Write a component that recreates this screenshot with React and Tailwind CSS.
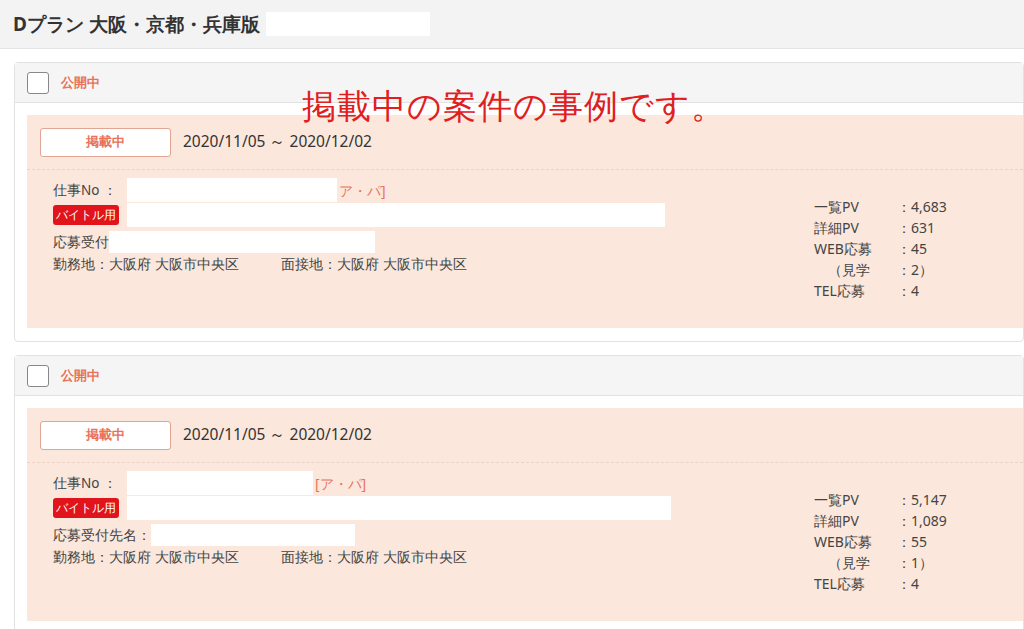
import React from 'react';

const Card = ({ stats, red1, red2, red3, showPlain }) => (
  <div className="ml-[14px] border border-[#e2e2e2] rounded-sm bg-white">
    <div className="h-[40px] bg-[#f5f5f5] border-b border-[#e2e2e2] flex items-center pl-[12px] gap-[12px]">
      <div className="w-[22px] h-[22px] bg-white border border-[#888] rounded-[3px]" />
      <span className="text-[13px] font-bold text-[#e8735a]">公開中</span>
    </div>
    <div className="pl-[12px] pt-[12px] pb-[13px]">
      <div className="bg-[#fbe7db] h-[213px]">
        <div className="h-[55px] flex items-center pl-[13px] border-b border-dashed border-[#ecd3c6] mx-0">
          <div className="w-[131px] h-[29px] bg-white border border-[#e0a593] rounded-[3px] flex items-center justify-center text-[13px] font-bold text-[#e8735a]">掲載中</div>
          <span className="ml-[12px] text-[15.5px] text-[#333]">2020/11/05 ～ 2020/12/02</span>
        </div>
        <div className="flex pl-[26px] pt-[8px] text-[13.5px] text-[#444]">
          <div className="flex-1">
            <div className="flex items-center h-[24px]">
              <span>仕事No ：</span>
              <div className="ml-[10px] h-[24px] bg-white" style={{ width: red1 }} />
              <span className="ml-[2px] text-[#e8735a] text-[14px]">{showPlain ? '[ア・パ]' : 'ア・パ]'}</span>
            </div>
            <div className="flex items-center h-[26px]">
              <span className="bg-[#e0141a] text-white text-[12px] rounded-[3px] px-[3px] leading-[20px]">バイトル用</span>
              <div className="ml-[8px] h-[24px] bg-white" style={{ width: red2 }} />
            </div>
            <div className="flex items-center h-[24px] mt-[2px]">
              <span>{showPlain ? '応募受付先名：' : '応募受付'}</span>
              <div className="h-[22px] bg-white" style={{ width: red3 }} />
            </div>
            <div className="flex h-[20px] items-center">
              <span className="w-[228px]">勤務地：大阪府 大阪市中央区</span>
              <span>面接地：大阪府 大阪市中央区</span>
            </div>
          </div>
          <div className="w-[209px] pt-[18px] text-[14px] leading-[21px] text-[#444]">
            {stats.map(([k, v], i) => (
              <div key={i} className="flex">
                <span className="w-[83px]">{k}</span>
                <span>{v}</span>
              </div>
            ))}
          </div>
        </div>
      </div>
    </div>
  </div>
);

export default function App() {
  return (
    <div className="relative w-[1024px] h-[629px] overflow-hidden bg-white font-['Noto_Sans_CJK_JP','Noto_Sans',sans-serif]">
      <div className="h-[49px] bg-[#f3f3f3] border-b border-[#e4e4e4] flex items-center pl-[13px]">
        <h1 className="text-[19px] font-bold text-[#333]">Dプラン 大阪・京都・兵庫版</h1>
        <div className="ml-[6px] w-[164px] h-[24px] bg-white" />
      </div>
      <div className="pt-[13px] flex flex-col gap-[13px]">
        <Card red1="210px" red2="538px" red3="266px"
          stats={[['一覧PV', '：4,683'], ['詳細PV', '：631'], ['WEB応募', '：45'], ['\u3000（見学', '：2）'], ['TEL応募', '：4']]} />
        <Card red1="186px" red2="544px" red3="204px" showPlain
          stats={[['一覧PV', '：5,147'], ['詳細PV', '：1,089'], ['WEB応募', '：55'], ['\u3000（見学', '：1）'], ['TEL応募', '：4']]} />
      </div>
      <div className="absolute left-[302px] top-[80px] text-[34px] text-[#e0201e] tracking-[1px]">掲載中の案件の事例です。</div>
    </div>
  );
}
